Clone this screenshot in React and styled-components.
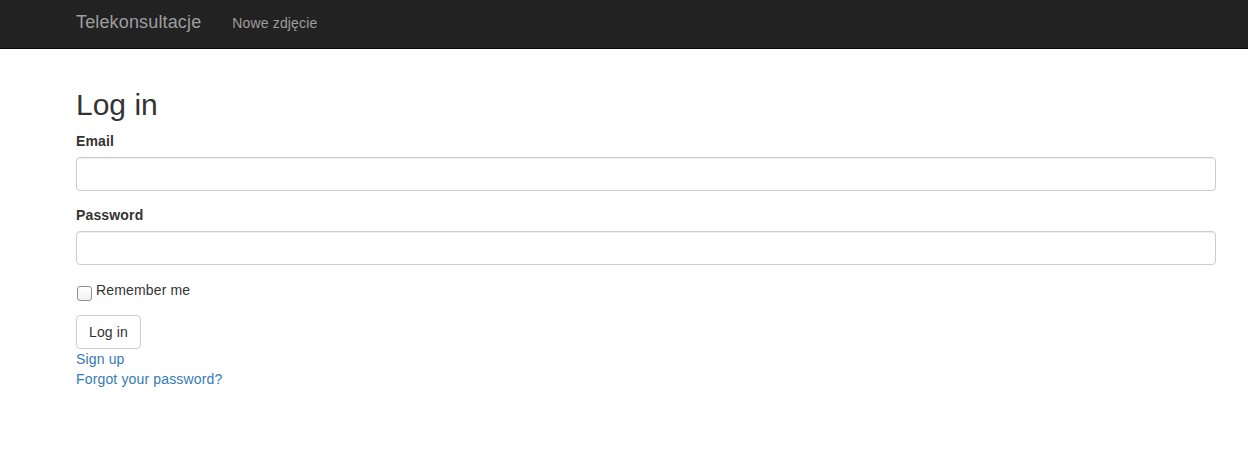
import styled, { createGlobalStyle } from "styled-components"

const Global = createGlobalStyle`
  html, body {
    margin: 0;
    padding: 0;
    background: #fff;
  }
  body {
    font-family: "Liberation Sans", Arial, sans-serif;
    font-size: 14px;
    line-height: 20px;
    letter-spacing: 0.15px;
    color: #333;
  }
  * { box-sizing: border-box; }
`

const Navbar = styled.nav`
  height: 49px;
  background-color: #222;
  border-bottom: 1px solid #080808;
  display: flex;
  align-items: baseline;
  padding: 12px 0 0 76px;
  gap: 31px;
`
const Brand = styled.a`
  font-size: 18px;
  line-height: 20px;
  color: #9d9d9d;
  text-decoration: none;
`
const NavLink = styled.a`
  font-size: 14px;
  line-height: 20px;
  color: #9d9d9d;
  text-decoration: none;
`
const Container = styled.main`
  padding: 39px 32px 0 76px;
`
const Title = styled.h2`
  font-size: 30px;
  font-weight: 400;
  line-height: 33px;
  letter-spacing: 0;
  margin: 0 0 10px;
`
const Group = styled.div`
  margin-bottom: 14px;
`
const Label = styled.label`
  display: inline-block;
  font-weight: 700;
  margin-bottom: 6px;
`
const Input = styled.input`
  display: block;
  width: 100%;
  height: 34px;
  padding: 6px 12px;
  font-size: 14px;
  border: 1px solid #ccc;
  border-radius: 4px;
  box-shadow: inset 0 1px 1px rgba(0, 0, 0, 0.075);
  outline: none;
`
const CheckRow = styled.label`
  display: flex;
  align-items: flex-start;
  height: 20px;
  margin: 15px 0 15px;
`
const Check = styled.input`
  appearance: none;
  width: 15px;
  height: 15px;
  margin: 6px 4px 0 1px;
  border: 1px solid #8f8f8f;
  border-radius: 3px;
  background: linear-gradient(#fff, #f0f0f0);
  flex-shrink: 0;
`
const Button = styled.button`
  display: block;
  font-family: inherit;
  font-size: 14px;
  line-height: 20px;
  letter-spacing: 0.15px;
  padding: 6px 12px;
  color: #333;
  background: #fff;
  border: 1px solid #ccc;
  border-radius: 4px;
`
const LinkP = styled.a`
  display: block;
  color: #337ab7;
  text-decoration: none;
`

export default function App() {
  return (
    <>
      <Global />
      <Navbar>
        <Brand href="#">Telekonsultacje</Brand>
        <NavLink href="#">Nowe zdjęcie</NavLink>
      </Navbar>
      <Container>
        <Title>Log in</Title>
        <Group>
          <Label>Email</Label>
          <Input type="email" />
        </Group>
        <Group>
          <Label>Password</Label>
          <Input type="password" />
        </Group>
        <CheckRow>
          <Check type="checkbox" />
          Remember me
        </CheckRow>
        <Button>Log in</Button>
        <LinkP href="#">Sign up</LinkP>
        <LinkP href="#">Forgot your password?</LinkP>
      </Container>
    </>
  )
}
